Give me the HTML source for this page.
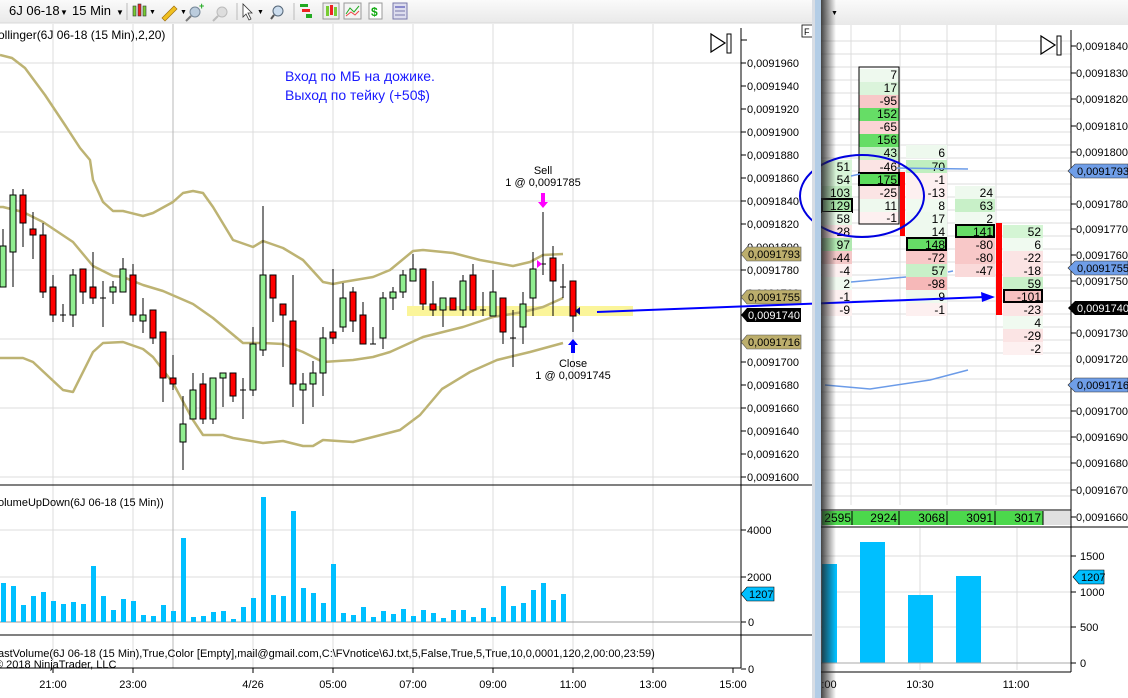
<!DOCTYPE html>
<html><head><meta charset="utf-8"><style>
html,body{margin:0;padding:0;background:#fff;}
svg{display:block;font-family:"Liberation Sans",Arial,sans-serif;}
</style></head><body>
<svg width="1128" height="698" viewBox="0 0 1128 698" xmlns="http://www.w3.org/2000/svg">
<defs>
<linearGradient id="tb" x1="0" y1="0" x2="0" y2="1"><stop offset="0" stop-color="#fafafa"/><stop offset="1" stop-color="#e9e9e9"/></linearGradient>
<linearGradient id="sh" x1="0" y1="0" x2="1" y2="0"><stop offset="0" stop-color="#222" stop-opacity="0.85"/><stop offset="1" stop-color="#222" stop-opacity="0"/></linearGradient>
</defs>
<rect width="1128" height="698" fill="#fff"/>
<!-- toolbar left -->
<rect x="0" y="0" width="814" height="23" fill="url(#tb)"/>
<line x1="0" y1="23" x2="814" y2="23" stroke="#d8d8d8"/>
<g font-size="13" fill="#000">
<text x="9" y="15">6J 06-18</text><text x="60" y="15" font-size="8">▼</text>
<text x="72" y="15">15 Min</text><text x="116" y="15" font-size="8">▼</text>
</g>
<line x1="127" y1="3" x2="127" y2="20" stroke="#bbb"/>
<rect x="133" y="6" width="3" height="10" fill="#7c3" stroke="#333" stroke-width="0.6"/><rect x="138" y="4" width="3" height="12" fill="#e22" stroke="#333" stroke-width="0.6"/><rect x="143" y="6" width="3" height="10" fill="#7c3" stroke="#333" stroke-width="0.6"/>
<text x="149" y="14" font-size="7">▼</text>
<path d="M162 18 L174 6 L177 9 L165 21 Z" fill="#f0c020" stroke="#a07010" stroke-width="0.7"/><text x="180" y="14" font-size="7">▼</text>
<circle cx="195" cy="12" r="5" fill="#bcd" stroke="#789"/><path d="M191 16 L186 21" stroke="#777" stroke-width="2"/><text x="199" y="9" font-size="9" fill="#2a2" font-weight="bold">+</text>
<circle cx="222" cy="12" r="5" fill="#ddd" stroke="#bbb"/><path d="M218 16 L213 21" stroke="#bbb" stroke-width="2"/>
<line x1="237" y1="3" x2="237" y2="20" stroke="#bbb"/>
<path d="M243 4 L243 17 L246 14 L249 20 L251 19 L248 13 L252 13 Z" fill="#fff" stroke="#333" stroke-width="0.8"/><text x="257" y="14" font-size="7">▼</text>
<circle cx="278" cy="11" r="5" fill="#cde" stroke="#567"/><path d="M274 15 L271 19" stroke="#555" stroke-width="2"/>
<line x1="294" y1="3" x2="294" y2="20" stroke="#bbb"/>
<rect x="300" y="4" width="8" height="3" fill="#2a2"/><rect x="302" y="9" width="8" height="3" fill="#e22"/><rect x="306" y="14" width="6" height="4" fill="#2a2"/>
<rect x="323" y="3" width="16" height="16" fill="#eee" stroke="#999"/><rect x="326" y="6" width="3" height="10" fill="#7c3"/><rect x="330" y="5" width="3" height="10" fill="#e22"/><rect x="334" y="7" width="3" height="9" fill="#7c3"/>
<rect x="344" y="3" width="17" height="16" fill="#f4f4f4" stroke="#999"/><path d="M346 14 L350 8 L354 12 L359 6" stroke="#2a2" fill="none"/><path d="M346 16 L351 12 L355 15 L359 11" stroke="#e44" fill="none"/>
<rect x="369" y="3" width="13" height="16" fill="#fff" stroke="#999"/><text x="371" y="16" font-size="12" fill="#1a1" font-weight="bold">$</text>
<rect x="393" y="3" width="14" height="16" fill="#dde" stroke="#77a"/><rect x="395" y="6" width="10" height="2" fill="#88c"/><rect x="395" y="10" width="10" height="2" fill="#aac"/><rect x="395" y="14" width="10" height="2" fill="#aac"/>

<!-- LEFT CHART grid -->
<g stroke="#dcdcdc" stroke-width="1">
<line x1="53" y1="24" x2="53" y2="668"/><line x1="133" y1="24" x2="133" y2="668"/><line x1="253" y1="24" x2="253" y2="668"/><line x1="333" y1="24" x2="333" y2="668"/><line x1="413" y1="24" x2="413" y2="668"/><line x1="493" y1="24" x2="493" y2="668"/><line x1="573" y1="24" x2="573" y2="668"/><line x1="653" y1="24" x2="653" y2="668"/>
<line x1="0" y1="63" x2="741" y2="63"/><line x1="0" y1="132" x2="741" y2="132"/><line x1="0" y1="201" x2="741" y2="201"/><line x1="0" y1="270" x2="741" y2="270"/><line x1="0" y1="339" x2="741" y2="339"/><line x1="0" y1="408" x2="741" y2="408"/><line x1="0" y1="477" x2="741" y2="477"/>
<line x1="0" y1="530" x2="741" y2="530"/><line x1="0" y1="577" x2="741" y2="577"/>
</g>
<line x1="173" y1="24" x2="173" y2="668" stroke="#b8b8b8"/>
<!-- yellow highlight -->
<rect x="407" y="306" width="226" height="10" fill="#fbf59a"/>
<!-- bollinger -->
<g fill="none" stroke="#bdb373" stroke-width="2.5" stroke-linejoin="round">
<path d="M0 55 L12 58 L25 68 L45 95 L65 125 L80 148 L90 160 L93 180 L103 202 L113 211 L123 211 L143 216 L153 213 L173 202 L183 193 L193 191 L203 193 L213 207 L233 240 L253 247 L263 241 L283 248 L303 260 L323 282 L333 284 L343 282 L373 277 L390 270 L413 251 L423 250 L453 253 L480 260 L513 266 L530 262 L543 255 L563 254"/>
<path d="M0 207 L3 207 L23 212 L43 222 L73 242 L93 266 L113 276 L123 277 L143 285 L163 291 L193 304 L213 318 L243 343 L263 343 L283 344 L303 352 L323 362 L353 360 L373 357 L390 352 L423 337 L463 327 L493 317 L523 312 L543 307 L563 298"/>
<path d="M0 358 L23 358 L33 362 L63 390 L73 392 L93 352 L103 343 L123 342 L143 349 L153 357 L173 383 L193 420 L203 435 L223 435 L233 438 L263 443 L283 441 L303 446 L313 446 L323 440 L353 442 L373 437 L400 430 L420 415 L442 389 L470 372 L497 360 L530 352 L563 343"/>
</g>
<!-- candles -->
<g stroke="#000" stroke-width="1">
<line x1="3" y1="229" x2="3" y2="287"/><line x1="13" y1="189" x2="13" y2="287"/><line x1="23" y1="189" x2="23" y2="247"/><line x1="33" y1="212" x2="33" y2="259"/><line x1="43" y1="223" x2="43" y2="298"/><line x1="53" y1="275" x2="53" y2="322"/><line x1="63" y1="304" x2="63" y2="322"/><line x1="73" y1="269" x2="73" y2="327"/><line x1="83" y1="269" x2="83" y2="304"/><line x1="93" y1="252" x2="93" y2="304"/><line x1="103" y1="281" x2="103" y2="327"/><line x1="113" y1="281" x2="113" y2="304"/><line x1="123" y1="258" x2="123" y2="292"/><line x1="133" y1="264" x2="133" y2="322"/><line x1="143" y1="298" x2="143" y2="333"/><line x1="153" y1="310" x2="153" y2="344"/><line x1="163" y1="332" x2="163" y2="402"/><line x1="173" y1="355" x2="173" y2="390"/><line x1="183" y1="396" x2="183" y2="470"/><line x1="193" y1="373" x2="193" y2="419"/><line x1="203" y1="373" x2="203" y2="424"/><line x1="213" y1="378" x2="213" y2="424"/><line x1="223" y1="373" x2="223" y2="407"/><line x1="233" y1="373" x2="233" y2="402"/><line x1="243" y1="378" x2="243" y2="419"/><line x1="253" y1="327" x2="253" y2="396"/><line x1="263" y1="206" x2="263" y2="356"/><line x1="273" y1="275" x2="273" y2="322"/><line x1="283" y1="304" x2="283" y2="367"/><line x1="293" y1="275" x2="293" y2="407"/><line x1="303" y1="373" x2="303" y2="424"/><line x1="313" y1="361" x2="313" y2="407"/><line x1="323" y1="327" x2="323" y2="396"/><line x1="333" y1="269" x2="333" y2="344"/><line x1="343" y1="283" x2="343" y2="332"/><line x1="353" y1="287" x2="353" y2="332"/><line x1="363" y1="302" x2="363" y2="344"/><line x1="373" y1="327" x2="373" y2="344"/><line x1="383" y1="292" x2="383" y2="349"/><line x1="393" y1="287" x2="393" y2="310"/><line x1="403" y1="270" x2="403" y2="298"/><line x1="413" y1="254" x2="413" y2="281"/><line x1="423" y1="269" x2="423" y2="310"/><line x1="433" y1="281" x2="433" y2="316"/><line x1="443" y1="298" x2="443" y2="327"/><line x1="453" y1="298" x2="453" y2="310"/><line x1="463" y1="275" x2="463" y2="316"/><line x1="473" y1="264" x2="473" y2="316"/><line x1="483" y1="292" x2="483" y2="316"/><line x1="493" y1="270" x2="493" y2="316"/><line x1="503" y1="298" x2="503" y2="344"/><line x1="513" y1="310" x2="513" y2="367"/><line x1="523" y1="292" x2="523" y2="344"/><line x1="533" y1="252" x2="533" y2="316"/><line x1="543" y1="212" x2="543" y2="275"/><line x1="553" y1="246" x2="553" y2="316"/><line x1="563" y1="264" x2="563" y2="298"/><line x1="573" y1="281" x2="573" y2="332"/>
<line x1="60" y1="315" x2="66" y2="315"/><line x1="100" y1="298" x2="106" y2="298"/><line x1="240" y1="390" x2="246" y2="390"/><line x1="370" y1="344" x2="376" y2="344"/><line x1="480" y1="310" x2="486" y2="310"/><line x1="510" y1="338" x2="516" y2="338"/><line x1="540" y1="264" x2="546" y2="264"/><line x1="560" y1="287" x2="566" y2="287"/>
</g>
<g stroke="#000" stroke-width="1" fill="#90ee90">
<rect x="0" y="246" width="6" height="41"/><rect x="10" y="195" width="6" height="57"/><rect x="70" y="275" width="6" height="40"/><rect x="110" y="287" width="6" height="5"/><rect x="120" y="269" width="6" height="23"/><rect x="140" y="315" width="6" height="6"/><rect x="180" y="424" width="6" height="18"/><rect x="190" y="390" width="6" height="29"/><rect x="210" y="378" width="6" height="41"/><rect x="220" y="373" width="6" height="5"/><rect x="250" y="344" width="6" height="46"/><rect x="260" y="275" width="6" height="75"/><rect x="300" y="384" width="6" height="6"/><rect x="310" y="373" width="6" height="11"/><rect x="320" y="338" width="6" height="35"/><rect x="340" y="298" width="6" height="29"/><rect x="380" y="298" width="6" height="40"/><rect x="390" y="292" width="6" height="6"/><rect x="400" y="275" width="6" height="17"/><rect x="410" y="269" width="6" height="12"/><rect x="440" y="298" width="6" height="12"/><rect x="460" y="281" width="6" height="29"/><rect x="490" y="292" width="6" height="24"/><rect x="520" y="304" width="6" height="23"/><rect x="530" y="269" width="6" height="29"/>
</g>
<g stroke="#000" stroke-width="1" fill="#f00">
<rect x="20" y="195" width="6" height="28"/><rect x="30" y="229" width="6" height="6"/><rect x="40" y="235" width="6" height="57"/><rect x="50" y="287" width="6" height="28"/><rect x="80" y="269" width="6" height="23"/><rect x="90" y="287" width="6" height="11"/><rect x="130" y="275" width="6" height="40"/><rect x="150" y="310" width="6" height="28"/><rect x="160" y="332" width="6" height="46"/><rect x="170" y="378" width="6" height="6"/><rect x="200" y="384" width="6" height="35"/><rect x="230" y="373" width="6" height="23"/><rect x="270" y="275" width="6" height="23"/><rect x="280" y="304" width="6" height="11"/><rect x="290" y="321" width="6" height="63"/><rect x="330" y="332" width="6" height="6"/><rect x="350" y="292" width="6" height="29"/><rect x="360" y="315" width="6" height="29"/><rect x="420" y="269" width="6" height="35"/><rect x="430" y="304" width="6" height="6"/><rect x="450" y="298" width="6" height="12"/><rect x="470" y="275" width="6" height="35"/><rect x="500" y="298" width="6" height="34"/><rect x="550" y="258" width="6" height="23"/><rect x="570" y="281" width="6" height="35"/>
</g>
<!-- trade markers -->
<g font-size="11" fill="#000" text-anchor="middle">
<text x="543" y="174">Sell</text><text x="543" y="186">1 @ 0,0091785</text>
<text x="573" y="367">Close</text><text x="573" y="379">1 @ 0,0091745</text>
</g>
<path d="M541 193 h4 v9 h3 l-5 6 l-5 -6 h3 z" fill="#ff00ff"/>
<path d="M537 260 l5 4 l-5 4 z" fill="#ff00ff"/>
<path d="M571 353 h4 v-8 h3 l-5 -6 l-5 6 h3 z" fill="#0000ff"/>
<path d="M580 307 l-5 4 l5 4 z" fill="#000080"/>
<!-- annotation text -->
<g font-size="14" fill="#1a1aff"><text x="285" y="81">Вход по МБ на дожике.</text><text x="285" y="100">Выход по тейку (+50$)</text></g>
<text x="-2" y="39" font-size="12" fill="#000">ollinger(6J 06-18 (15 Min),2,20)</text>
<!-- left icon & F -->
<path d="M711 34 L711 52 L725 43 Z" fill="#fff" stroke="#000" stroke-width="1.2"/><rect x="727" y="34" width="4" height="19" fill="#fff" stroke="#000"/>
<rect x="802" y="25" width="11" height="12" fill="#fff" stroke="#000" stroke-width="0.8"/><text x="804" y="35" font-size="9">F</text>
<!-- left price axis -->
<line x1="741" y1="28" x2="741" y2="668" stroke="#000"/>
<g stroke="#000"><line x1="741" y1="40" x2="747" y2="40"/><line x1="741" y1="63" x2="746" y2="63"/><line x1="741" y1="86" x2="746" y2="86"/><line x1="741" y1="109" x2="746" y2="109"/><line x1="741" y1="132" x2="746" y2="132"/><line x1="741" y1="155" x2="746" y2="155"/><line x1="741" y1="178" x2="746" y2="178"/><line x1="741" y1="201" x2="746" y2="201"/><line x1="741" y1="224" x2="746" y2="224"/><line x1="741" y1="270" x2="746" y2="270"/><line x1="741" y1="362" x2="746" y2="362"/><line x1="741" y1="385" x2="746" y2="385"/><line x1="741" y1="408" x2="746" y2="408"/><line x1="741" y1="431" x2="746" y2="431"/><line x1="741" y1="454" x2="746" y2="454"/><line x1="741" y1="477" x2="746" y2="477"/><line x1="741" y1="530" x2="746" y2="530"/><line x1="741" y1="577" x2="746" y2="577"/><line x1="741" y1="622" x2="746" y2="622"/><line x1="741" y1="669" x2="746" y2="669"/></g>
<g font-size="11" fill="#000"><text x="747" y="67">0,0091960</text><text x="747" y="90">0,0091940</text><text x="747" y="113">0,0091920</text><text x="747" y="136">0,0091900</text><text x="747" y="159">0,0091880</text><text x="747" y="182">0,0091860</text><text x="747" y="205">0,0091840</text><text x="747" y="228">0,0091820</text><text x="747" y="251">0,0091800</text><text x="747" y="274">0,0091780</text><text x="747" y="297">0,0091760</text><text x="747" y="366">0,0091700</text><text x="747" y="389">0,0091680</text><text x="747" y="412">0,0091660</text><text x="747" y="435">0,0091640</text><text x="747" y="458">0,0091620</text><text x="747" y="481">0,0091600</text>
<text x="747" y="534">4000</text><text x="747" y="581">2000</text><text x="748" y="626">0</text><text x="748" y="673">0</text></g>
<g font-size="11"><path d="M741 254 L747 247 H801 V261 H747 Z" fill="#bcae6c" stroke="#555" stroke-width="0.6"/><text x="748" y="258">0,0091793</text>
<path d="M741 297 L747 290 H801 V304 H747 Z" fill="#bcae6c" stroke="#555" stroke-width="0.6"/><text x="748" y="301">0,0091755</text>
<path d="M741 315 L747 308 H801 V322 H747 Z" fill="#000"/><text x="748" y="319" fill="#fff">0,0091740</text>
<path d="M741 342 L747 335 H801 V349 H747 Z" fill="#bcae6c" stroke="#555" stroke-width="0.6"/><text x="748" y="346">0,0091716</text>
<path d="M741 594 L747 587 H774 V601 H747 Z" fill="#00bfff" stroke="#000" stroke-width="0.6"/><text x="749" y="598">1207</text></g>
<!-- panel separators -->
<line x1="0" y1="485" x2="814" y2="485" stroke="#000"/>
<line x1="0" y1="635" x2="814" y2="635" stroke="#000"/>
<line x1="0" y1="668" x2="741" y2="668" stroke="#000"/>
<text x="-2" y="506" font-size="11" fill="#000">olumeUpDown(6J 06-18 (15 Min))</text>
<text x="-2" y="657" font-size="11" fill="#000">astVolume(6J 06-18 (15 Min),True,Color [Empty],mail@gmail.com,C:\FVnotice\6J.txt,5,False,True,5,True,10,0,0001,120,2,00:00,23:59)</text>
<text x="-5" y="668" font-size="11" fill="#000">© 2018 NinjaTrader, LLC</text>
<line x1="0" y1="622" x2="741" y2="622" stroke="#999"/>
<!-- volume bars -->
<g fill="#00bfff">
<rect x="1" y="583" width="5" height="39"/><rect x="11" y="586" width="5" height="36"/><rect x="21" y="605" width="5" height="17"/><rect x="31" y="596" width="5" height="26"/><rect x="41" y="592" width="5" height="30"/><rect x="51" y="601" width="5" height="21"/><rect x="61" y="604" width="5" height="18"/><rect x="71" y="602" width="5" height="20"/><rect x="81" y="604" width="5" height="18"/><rect x="91" y="566" width="5" height="56"/><rect x="101" y="596" width="5" height="26"/><rect x="111" y="610" width="5" height="12"/><rect x="121" y="599" width="5" height="23"/><rect x="131" y="601" width="5" height="21"/><rect x="141" y="615" width="5" height="7"/><rect x="151" y="616" width="5" height="6"/><rect x="161" y="605" width="5" height="17"/><rect x="171" y="611" width="5" height="11"/><rect x="181" y="538" width="5" height="84"/><rect x="191" y="617" width="5" height="5"/><rect x="201" y="616" width="5" height="6"/><rect x="211" y="612" width="5" height="10"/><rect x="221" y="611" width="5" height="11"/><rect x="231" y="619" width="5" height="3"/><rect x="241" y="607" width="5" height="15"/><rect x="251" y="598" width="5" height="24"/><rect x="261" y="497" width="5" height="125"/><rect x="271" y="595" width="5" height="27"/><rect x="281" y="596" width="5" height="26"/><rect x="291" y="511" width="5" height="111"/><rect x="301" y="588" width="5" height="34"/><rect x="311" y="593" width="5" height="29"/><rect x="321" y="603" width="5" height="19"/><rect x="331" y="564" width="5" height="58"/><rect x="341" y="613" width="5" height="9"/><rect x="351" y="615" width="5" height="7"/><rect x="361" y="607" width="5" height="15"/><rect x="371" y="617" width="5" height="5"/><rect x="381" y="611" width="5" height="11"/><rect x="391" y="614" width="5" height="8"/><rect x="401" y="609" width="5" height="13"/><rect x="411" y="616" width="5" height="6"/><rect x="421" y="610" width="5" height="12"/><rect x="431" y="613" width="5" height="9"/><rect x="441" y="618" width="5" height="4"/><rect x="451" y="610" width="5" height="12"/><rect x="461" y="610" width="5" height="12"/><rect x="471" y="617" width="5" height="5"/><rect x="481" y="608" width="5" height="14"/><rect x="491" y="617" width="5" height="5"/><rect x="501" y="586" width="5" height="36"/><rect x="511" y="606" width="5" height="16"/><rect x="521" y="603" width="5" height="19"/><rect x="531" y="590" width="5" height="32"/><rect x="541" y="583" width="5" height="39"/><rect x="551" y="600" width="5" height="22"/><rect x="561" y="594" width="5" height="28"/>
</g>
<!-- time axis -->
<g stroke="#000"><line x1="53" y1="668" x2="53" y2="673"/><line x1="133" y1="668" x2="133" y2="673"/><line x1="253" y1="668" x2="253" y2="673"/><line x1="333" y1="668" x2="333" y2="673"/><line x1="413" y1="668" x2="413" y2="673"/><line x1="493" y1="668" x2="493" y2="673"/><line x1="573" y1="668" x2="573" y2="673"/><line x1="653" y1="668" x2="653" y2="673"/><line x1="733" y1="668" x2="733" y2="673"/></g>
<g font-size="11" fill="#000" text-anchor="middle"><text x="53" y="688">21:00</text><text x="133" y="688">23:00</text><text x="253" y="688">4/26</text><text x="333" y="688">05:00</text><text x="413" y="688">07:00</text><text x="493" y="688">09:00</text><text x="573" y="688">11:00</text><text x="653" y="688">13:00</text><text x="733" y="688">15:00</text></g>

<!-- RIGHT WINDOW -->
<rect x="814" y="0" width="314" height="698" fill="#fff"/>
<rect x="820" y="0" width="308" height="25" fill="url(#tb)"/>
<text x="831" y="15" font-size="7">▼</text>
<g stroke="#dcdcdc">
<line x1="851" y1="25" x2="851" y2="505"/><line x1="900" y1="25" x2="900" y2="505"/><line x1="947" y1="25" x2="947" y2="505"/><line x1="996" y1="25" x2="996" y2="505"/>
<line x1="820" y1="41" x2="1071" y2="41"/><line x1="820" y1="54" x2="1071" y2="54"/><line x1="820" y1="67" x2="1071" y2="67"/><line x1="820" y1="80" x2="1071" y2="80"/><line x1="820" y1="93" x2="1071" y2="93"/><line x1="820" y1="106" x2="1071" y2="106"/><line x1="820" y1="119" x2="1071" y2="119"/><line x1="820" y1="132" x2="1071" y2="132"/><line x1="820" y1="145" x2="1071" y2="145"/><line x1="820" y1="158" x2="1071" y2="158"/><line x1="820" y1="171" x2="1071" y2="171"/><line x1="820" y1="184" x2="1071" y2="184"/><line x1="820" y1="197" x2="1071" y2="197"/><line x1="820" y1="210" x2="1071" y2="210"/><line x1="820" y1="223" x2="1071" y2="223"/><line x1="820" y1="236" x2="1071" y2="236"/><line x1="820" y1="249" x2="1071" y2="249"/><line x1="820" y1="262" x2="1071" y2="262"/><line x1="820" y1="275" x2="1071" y2="275"/><line x1="820" y1="288" x2="1071" y2="288"/><line x1="820" y1="301" x2="1071" y2="301"/><line x1="820" y1="314" x2="1071" y2="314"/><line x1="820" y1="327" x2="1071" y2="327"/><line x1="820" y1="340" x2="1071" y2="340"/><line x1="820" y1="353" x2="1071" y2="353"/><line x1="820" y1="366" x2="1071" y2="366"/><line x1="820" y1="379" x2="1071" y2="379"/><line x1="820" y1="392" x2="1071" y2="392"/><line x1="820" y1="405" x2="1071" y2="405"/><line x1="820" y1="418" x2="1071" y2="418"/><line x1="820" y1="431" x2="1071" y2="431"/><line x1="820" y1="444" x2="1071" y2="444"/><line x1="820" y1="457" x2="1071" y2="457"/><line x1="820" y1="470" x2="1071" y2="470"/><line x1="820" y1="483" x2="1071" y2="483"/><line x1="820" y1="496" x2="1071" y2="496"/>
<line x1="920" y1="528" x2="920" y2="670"/><line x1="1017" y1="528" x2="1017" y2="670"/>
<line x1="820" y1="556" x2="1071" y2="556"/><line x1="820" y1="592" x2="1071" y2="592"/><line x1="820" y1="627" x2="1071" y2="627"/>
</g>
<!-- footprint cells -->
<g font-size="12" fill="#000" text-anchor="end">
<!-- col1 x 822-852 -->
<rect x="822" y="160" width="30" height="13" fill="#d8f5d8"/><text x="850" y="171">51</text>
<rect x="822" y="173" width="30" height="13" fill="#d8f5d8"/><text x="850" y="184">54</text>
<rect x="822" y="186" width="30" height="13" fill="#bfe9bf"/><text x="850" y="197">103</text>
<rect x="822" y="199" width="30" height="13" fill="#a8e4a8" stroke="#000" stroke-width="2"/><text x="850" y="210">129</text>
<rect x="822" y="212" width="30" height="13" fill="#e6f7e6"/><text x="850" y="223">58</text>
<rect x="822" y="225" width="30" height="13" fill="#fbe4e4"/><text x="850" y="236">-28</text>
<rect x="822" y="238" width="30" height="13" fill="#b0e8b0"/><text x="850" y="249">97</text>
<rect x="822" y="251" width="30" height="13" fill="#f4c8c8"/><text x="850" y="262">-44</text>
<rect x="822" y="264" width="30" height="13" fill="#fdf0f0"/><text x="850" y="275">-4</text>
<rect x="822" y="277" width="30" height="13" fill="#f0faf0"/><text x="850" y="288">2</text>
<rect x="822" y="290" width="30" height="13" fill="#fdf0f0"/><text x="850" y="301">-1</text>
<rect x="822" y="303" width="30" height="13" fill="#fdf0f0"/><text x="850" y="314">-9</text>
<!-- col2 x 859-899 -->
<rect x="859" y="69" width="40" height="13" fill="#eef9ee"/><text x="897" y="79">7</text>
<rect x="859" y="82" width="40" height="13" fill="#dbf4db"/><text x="897" y="92">17</text>
<rect x="859" y="95" width="40" height="13" fill="#f8c8c8"/><text x="897" y="105">-95</text>
<rect x="859" y="108" width="40" height="13" fill="#66dd66"/><text x="897" y="118">152</text>
<rect x="859" y="121" width="40" height="13" fill="#fbd4d4"/><text x="897" y="131">-65</text>
<rect x="859" y="134" width="40" height="13" fill="#66dd66"/><text x="897" y="144">156</text>
<rect x="859" y="147" width="40" height="13" fill="#c8f0c8"/><text x="897" y="157">43</text>
<rect x="859" y="160" width="40" height="13" fill="#fbe4e4"/><text x="897" y="171">-46</text>
<rect x="859" y="173" width="40" height="12" fill="#5cdc5c" stroke="#000" stroke-width="2"/><text x="897" y="184">175</text>
<rect x="859" y="186" width="40" height="13" fill="#fbe4e4"/><text x="897" y="197">-25</text>
<rect x="859" y="199" width="40" height="13" fill="#eef9ee"/><text x="897" y="210">11</text>
<rect x="859" y="212" width="40" height="12" fill="#fdf0f0"/><text x="897" y="222">-1</text>
<rect x="859" y="67" width="40" height="157" fill="none" stroke="#000" stroke-width="1"/>
<!-- col3 x 906-947 -->
<rect x="906" y="145" width="41" height="13" fill="#eef9ee"/><text x="945" y="157">6</text>
<rect x="906" y="160" width="41" height="13" fill="#c0efc0"/><text x="945" y="171">70</text>
<rect x="906" y="173" width="41" height="13" fill="#fdf0f0"/><text x="945" y="184">-1</text>
<rect x="906" y="186" width="41" height="13" fill="#fdf0f0"/><text x="945" y="197">-13</text>
<rect x="906" y="199" width="41" height="13" fill="#f0faf0"/><text x="945" y="210">8</text>
<rect x="906" y="212" width="41" height="13" fill="#eef9ee"/><text x="945" y="223">17</text>
<rect x="906" y="225" width="41" height="13" fill="#eef9ee"/><text x="945" y="236">14</text>
<rect x="907" y="238" width="39" height="12" fill="#66dd66" stroke="#000" stroke-width="2"/><text x="945" y="249">148</text>
<rect x="906" y="251" width="41" height="13" fill="#f8c8c8"/><text x="945" y="262">-72</text>
<rect x="906" y="264" width="41" height="13" fill="#c8f0c8"/><text x="945" y="275">57</text>
<rect x="906" y="277" width="41" height="13" fill="#f6b8b8"/><text x="945" y="288">-98</text>
<rect x="906" y="290" width="41" height="13" fill="#eef9ee"/><text x="945" y="301">9</text>
<rect x="906" y="303" width="41" height="13" fill="#fdf0f0"/><text x="945" y="314">-1</text>
<!-- col4 x 955-995 -->
<rect x="955" y="186" width="40" height="13" fill="#eef9ee"/><text x="993" y="197">24</text>
<rect x="955" y="199" width="40" height="13" fill="#c8f0c8"/><text x="993" y="210">63</text>
<rect x="955" y="212" width="40" height="13" fill="#f0faf0"/><text x="993" y="223">2</text>
<rect x="956" y="225" width="38" height="12" fill="#66dd66" stroke="#000" stroke-width="2"/><text x="993" y="236">141</text>
<rect x="955" y="238" width="40" height="13" fill="#f8c8c8"/><text x="993" y="249">-80</text>
<rect x="955" y="251" width="40" height="13" fill="#f8c8c8"/><text x="993" y="262">-80</text>
<rect x="955" y="264" width="40" height="13" fill="#fadada"/><text x="993" y="275">-47</text>
<!-- col5 x 1003-1043 -->
<rect x="1003" y="225" width="40" height="13" fill="#d4f5d4"/><text x="1041" y="236">52</text>
<rect x="1003" y="238" width="40" height="13" fill="#f0faf0"/><text x="1041" y="249">6</text>
<rect x="1003" y="251" width="40" height="13" fill="#fbe4e4"/><text x="1041" y="262">-22</text>
<rect x="1003" y="264" width="40" height="13" fill="#fbe4e4"/><text x="1041" y="275">-18</text>
<rect x="1003" y="277" width="40" height="13" fill="#c8f0c8"/><text x="1041" y="288">59</text>
<rect x="1004" y="290" width="38" height="12" fill="#f8c0c0" stroke="#000" stroke-width="2"/><text x="1041" y="301">-101</text>
<rect x="1003" y="303" width="40" height="13" fill="#fbe4e4"/><text x="1041" y="314">-23</text>
<rect x="1003" y="316" width="40" height="13" fill="#f0faf0"/><text x="1041" y="327">4</text>
<rect x="1003" y="329" width="40" height="13" fill="#fbe4e4"/><text x="1041" y="340">-29</text>
<rect x="1003" y="342" width="40" height="13" fill="#fdf0f0"/><text x="1041" y="353">-2</text>
</g>
<rect x="900" y="172" width="5" height="64" fill="#f00"/>
<rect x="996" y="223" width="6" height="92" fill="#f00"/>
<!-- light blue lines -->
<g stroke="#6b9be8" stroke-width="1.5" fill="none">
<path d="M851 176 L860 174"/><path d="M897 168 L968 169"/><path d="M851 282 L906 277"/><path d="M948 272 L953 271"/><path d="M825 385 L870 389 L930 380 L968 370"/>
</g>
<ellipse cx="862" cy="196" rx="62" ry="41" fill="none" stroke="#0000e0" stroke-width="2"/>
<!-- big blue arrow -->
<line x1="597" y1="312" x2="985" y2="297" stroke="#0000ff" stroke-width="2"/>
<path d="M995 297 L981 292 L982 302 Z" fill="#0000ff"/>
<!-- totals -->
<line x1="820" y1="510" x2="1071" y2="510" stroke="#000"/>
<rect x="822" y="511" width="221" height="14" fill="#4cd84c"/><rect x="1043" y="511" width="28" height="14" fill="#e0e0e0"/>
<g stroke="#000"><line x1="852" y1="511" x2="852" y2="525"/><line x1="899" y1="511" x2="899" y2="525"/><line x1="947" y1="511" x2="947" y2="525"/><line x1="995" y1="511" x2="995" y2="525"/><line x1="1043" y1="511" x2="1043" y2="525"/></g>
<g font-size="12" text-anchor="end"><text x="851" y="522">2595</text><text x="897" y="522">2924</text><text x="945" y="522">3068</text><text x="993" y="522">3091</text><text x="1041" y="522">3017</text></g>
<line x1="820" y1="527" x2="1128" y2="527" stroke="#000"/>
<!-- right volume -->
<g fill="#00bfff"><rect x="822" y="564" width="15" height="99"/><rect x="860" y="542" width="25" height="121"/><rect x="908" y="595" width="25" height="68"/><rect x="956" y="576" width="25" height="87"/></g>
<line x1="820" y1="663" x2="1071" y2="663" stroke="#aaa"/>
<line x1="820" y1="672" x2="1071" y2="672" stroke="#000"/>
<!-- right axis -->
<line x1="1071" y1="30" x2="1071" y2="672" stroke="#000"/>
<path d="M1041 36 L1041 54 L1055 45 Z" fill="#fff" stroke="#000" stroke-width="1.2"/><rect x="1057" y="36" width="4" height="19" fill="#fff" stroke="#000"/>
<g stroke="#000"><line x1="1071" y1="46" x2="1076" y2="46"/><line x1="1071" y1="73" x2="1076" y2="73"/><line x1="1071" y1="99" x2="1076" y2="99"/><line x1="1071" y1="126" x2="1076" y2="126"/><line x1="1071" y1="152" x2="1076" y2="152"/><line x1="1071" y1="204" x2="1076" y2="204"/><line x1="1071" y1="229" x2="1076" y2="229"/><line x1="1071" y1="255" x2="1076" y2="255"/><line x1="1071" y1="281" x2="1076" y2="281"/><line x1="1071" y1="333" x2="1076" y2="333"/><line x1="1071" y1="411" x2="1076" y2="411"/><line x1="1071" y1="437" x2="1076" y2="437"/><line x1="1071" y1="463" x2="1076" y2="463"/><line x1="1071" y1="490" x2="1076" y2="490"/><line x1="1071" y1="517" x2="1076" y2="517"/><line x1="1071" y1="556" x2="1076" y2="556"/><line x1="1071" y1="592" x2="1076" y2="592"/><line x1="1071" y1="627" x2="1076" y2="627"/><line x1="1071" y1="663" x2="1076" y2="663"/></g>
<g font-size="11" fill="#000"><text x="1076" y="50">0,0091840</text><text x="1076" y="77">0,0091830</text><text x="1076" y="103">0,0091820</text><text x="1076" y="130">0,0091810</text><text x="1076" y="156">0,0091800</text><text x="1076" y="208">0,0091780</text><text x="1076" y="233">0,0091770</text><text x="1076" y="259">0,0091760</text><text x="1076" y="285">0,0091750</text><text x="1076" y="337">0,0091730</text><text x="1076" y="363">0,0091720</text><text x="1076" y="415">0,0091700</text><text x="1076" y="441">0,0091690</text><text x="1076" y="467">0,0091680</text><text x="1076" y="494">0,0091670</text><text x="1076" y="521">0,0091660</text>
<text x="1080" y="560">1500</text><text x="1080" y="596">1000</text><text x="1080" y="631">500</text><text x="1080" y="667">0</text></g>
<g font-size="11"><path d="M1068 171 L1075 164 H1128 V178 H1075 Z" fill="#6f9ee8" stroke="#333" stroke-width="0.6"/><text x="1077" y="175">0,0091793</text>
<path d="M1068 268 L1075 261 H1128 V275 H1075 Z" fill="#6f9ee8" stroke="#333" stroke-width="0.6"/><text x="1077" y="272">0,0091755</text>
<path d="M1068 308 L1075 301 H1128 V315 H1075 Z" fill="#000"/><text x="1077" y="312" fill="#fff">0,0091740</text>
<path d="M1068 385 L1075 378 H1128 V392 H1075 Z" fill="#6f9ee8" stroke="#333" stroke-width="0.6"/><text x="1077" y="389">0,0091716</text>
<path d="M1073 577 L1079 570 H1104 V584 H1079 Z" fill="#00bfff" stroke="#000" stroke-width="0.6"/><text x="1081" y="581">1207</text></g>
<g font-size="11" fill="#000" text-anchor="middle"><text x="829" y="688">:00</text><text x="920" y="688">10:30</text><text x="1016" y="688">11:00</text></g>
<!-- window frame and shadow -->
<rect x="812" y="0" width="3" height="698" fill="#d8dde4"/>
<rect x="815" y="0" width="6" height="698" fill="#b3cde6"/>
<rect x="821" y="0" width="15" height="698" fill="url(#sh)"/>
</svg>
</body></html>
